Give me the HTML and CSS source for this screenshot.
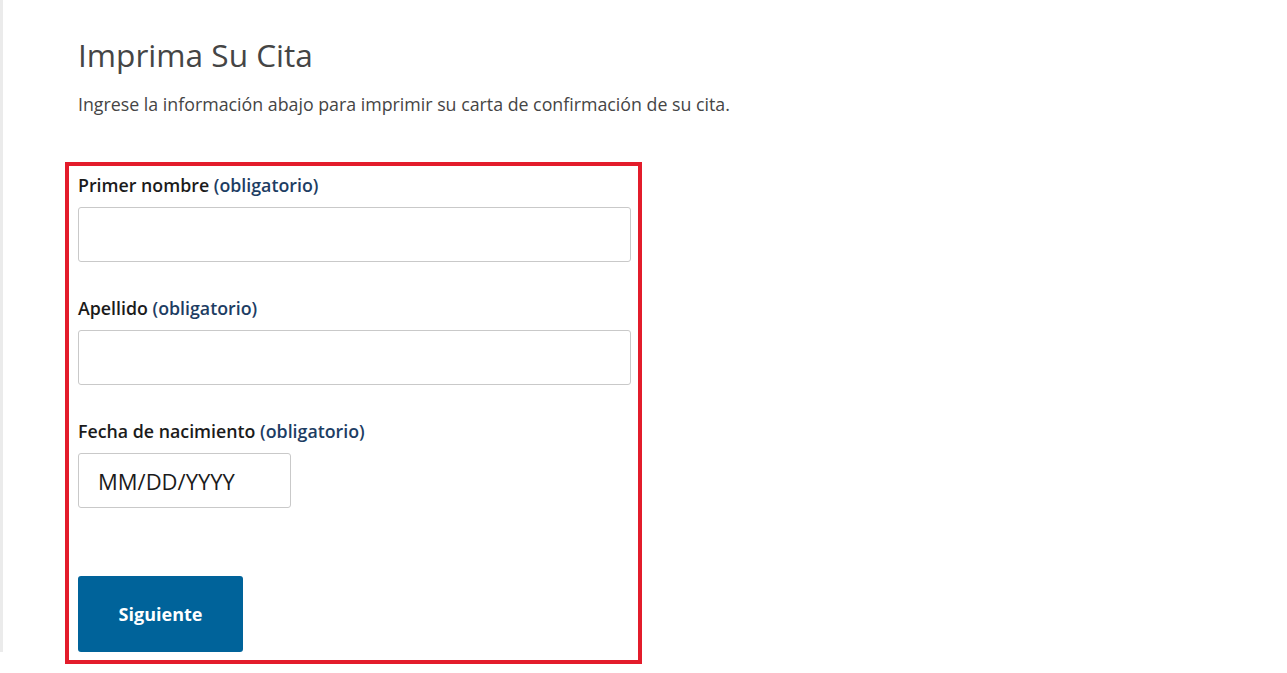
FILE: index.html
```html
<!DOCTYPE html>
<html lang="es">
<head>
  <meta charset="UTF-8">
  <meta name="viewport" content="width=device-width, initial-scale=1.0">
  <title>Imprima Su Cita</title>
  <link rel="stylesheet" href="styles.css">
</head>
<body>
  <div class="page">
    <h1>Imprima Su Cita</h1>
    <p class="intro">Ingrese la información abajo para imprimir su carta de confirmación de su cita.</p>
    <form class="print-form">
      <label class="field-label" for="first-name">Primer nombre <span class="required">(obligatorio)</span></label>
      <input class="text-input" id="first-name" type="text">

      <label class="field-label" for="last-name">Apellido <span class="required">(obligatorio)</span></label>
      <input class="text-input" id="last-name" type="text">

      <label class="field-label" for="dob">Fecha de nacimiento <span class="required">(obligatorio)</span></label>
      <input class="text-input date-input" id="dob" type="text" placeholder="MM/DD/YYYY">

      <button class="btn-next" type="button">Siguiente</button>
    </form>
  </div>
</body>
</html>
```

FILE: styles.css
```css
html, body {
  height: 100%;
}
body {
  margin: 0;
  font-family: "Open Sans", sans-serif;
  color: #454545;
  background: #fff linear-gradient(#ebebeb, #ebebeb) no-repeat 0 0 / 3px 652px;
}
.page {
  padding-left: 65px;
}
h1 {
  margin: 0;
  padding: 33px 0 0 13px;
  font-size: 31.6px;
  font-weight: 400;
  line-height: 44px;
  color: #454545;
}
.intro {
  margin: 0;
  padding: 15px 0 0 13px;
  font-size: 17.8px;
  line-height: 24px;
}
.print-form {
  width: 553px;
  margin-top: 46px;
  padding: 7px 7px 8px 9px;
  border: 4px solid #e31c2b;
}
.field-label {
  display: block;
  font-size: 17.8px;
  font-weight: 600;
  line-height: 24px;
  color: #1b1b1b;
  margin-bottom: 10px;
}
.required {
  color: #1d3d63;
}
.text-input {
  display: block;
  width: 100%;
  height: 55px;
  box-sizing: border-box;
  margin: 0 0 34px;
  border: 1px solid #c9c9c9;
  border-radius: 3px;
  font: inherit;
  font-size: 22px;
  color: #1b1b1b;
}
.date-input {
  width: 213px;
  padding-left: 19px;
  margin-bottom: 68px;
}
.date-input::placeholder {
  color: #1b1b1b;
  opacity: 1;
}
.btn-next {
  display: block;
  width: 165px;
  height: 76px;
  border: 0;
  border-radius: 3px;
  background: #00639a;
  color: #fff;
  font: inherit;
  font-size: 18px;
  font-weight: 700;
}
```
